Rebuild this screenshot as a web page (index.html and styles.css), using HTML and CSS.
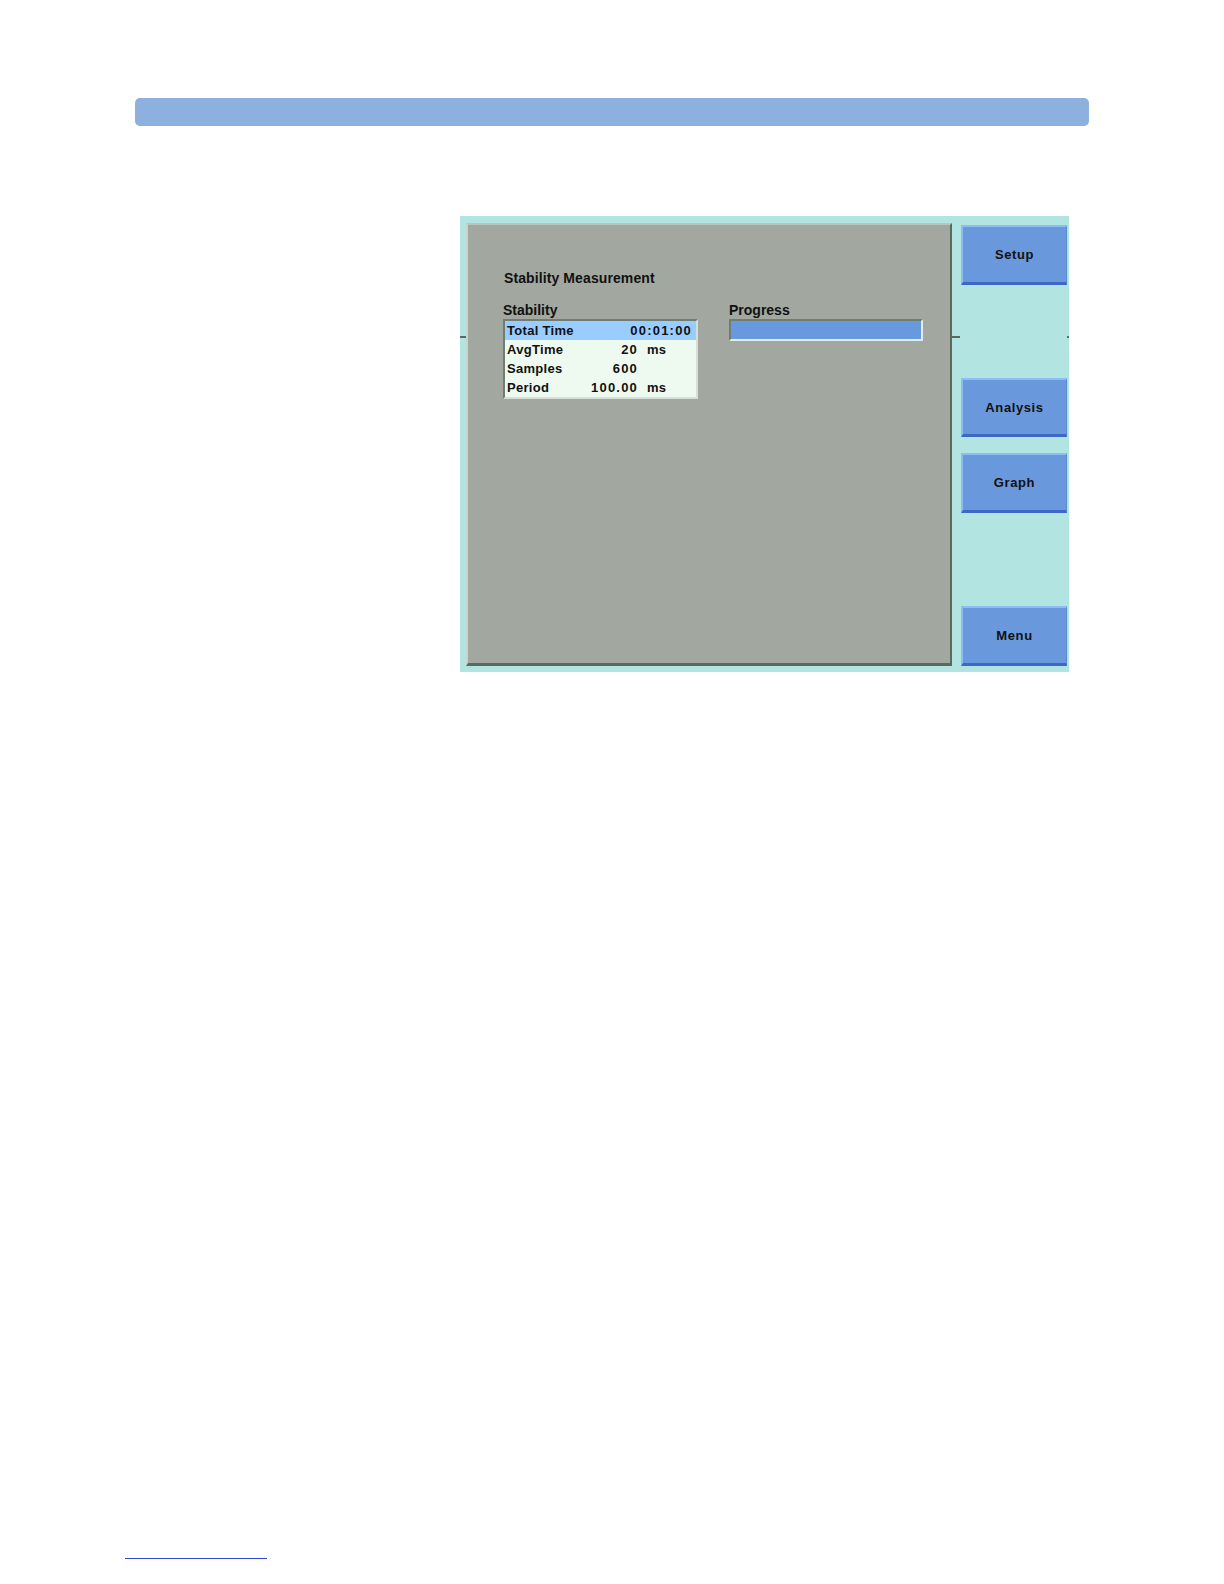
FILE: index.html
```html
<!DOCTYPE html>
<html>
<head>
<meta charset="utf-8">
<link rel="stylesheet" href="styles.css">
</head>
<body>
<div class="page">
  <div class="header-bar"></div>
  <div class="screen">
    <span class="tick tick-left"></span>
    <span class="tick tick-mid"></span>
    <span class="tick tick-right"></span>
    <div class="panel">
      <div class="title">Stability Measurement</div>
      <div class="groups">
        <div class="group">
          <div class="group-label">Stability</div>
          <div class="table">
            <div class="row sel"><span class="lbl">Total Time</span><span class="val wide">00:01:00</span></div>
            <div class="row"><span class="lbl">AvgTime</span><span class="val">20</span><span class="unit">ms</span></div>
            <div class="row"><span class="lbl">Samples</span><span class="val">600</span><span class="unit"></span></div>
            <div class="row"><span class="lbl">Period</span><span class="val">100.00</span><span class="unit">ms</span></div>
          </div>
        </div>
        <div class="group prog-group">
          <div class="group-label">Progress</div>
          <div class="progress"></div>
        </div>
      </div>
    </div>
    <div class="softkeys">
      <div class="key">Setup</div>
      <div class="spacer"></div>
      <div class="key">Analysis</div>
      <div class="key k3">Graph</div>
      <div class="spacer"></div>
      <div class="key">Menu</div>
    </div>
  </div>
  <div class="foot-line"></div>
</div>
</body>
</html>
```
FILE: styles.css
```css
html, body {
  margin: 0;
  padding: 0;
  background: #ffffff;
  overflow: hidden;
}
.page {
  width: 1224px;
  padding-top: 98px;
  box-sizing: border-box;
  font-family: "Liberation Sans", Arial, sans-serif;
}
.header-bar {
  margin-left: 135px;
  width: 954px;
  height: 28px;
  background: #8eb0df;
  border-radius: 5px;
}
.screen {
  position: relative;
  margin-left: 460px;
  margin-top: 90px;
  width: 609px;
  height: 456px;
  background: #b2e4e2;
  box-sizing: border-box;
  padding: 7px 2px 6px 6px;
  display: flex;
}
.tick {
  position: absolute;
  top: 120px;
  height: 2px;
  background: #5a6a60;
}
.tick-left { left: 0; width: 6px; }
.tick-mid { left: 492px; width: 8px; }
.tick-right { left: 607px; width: 2px; }
.panel {
  width: 486px;
  height: 443px;
  box-sizing: border-box;
  background: #a2a89f;
  border-left: 2px solid #c8d4cc;
  border-top: 2px solid #b8c4bc;
  border-right: 2px solid #5a6a5e;
  border-bottom: 3px solid #5a6a5e;
  padding: 45px 0 0 35px;
}
.title {
  font-size: 14px;
  font-weight: bold;
  color: #111;
  line-height: 16px;
  margin-left: 1px;
  letter-spacing: 0.1px;
}
.groups {
  display: flex;
  margin-top: 17px;
}
.group-label {
  font-size: 14px;
  font-weight: bold;
  color: #111;
  line-height: 15px;
  margin-bottom: 1px;
}
.table {
  width: 195px;
  box-sizing: border-box;
  border-top: 2px solid #6f7d74;
  border-left: 2px solid #6f7d74;
  border-right: 2px solid #d6dfd8;
  border-bottom: 2px solid #d6dfd8;
  background: #eefaf0;
}
.row {
  display: flex;
  height: 19px;
  align-items: center;
  font-size: 13px;
  font-weight: bold;
  color: #111;
  padding-left: 2px;
  letter-spacing: 0.3px;
}
.row.sel {
  background: #99ccff;
}
.lbl {
  width: 75px;
}
.val {
  width: 56px;
  text-align: right;
  letter-spacing: 1.2px;
}
.val.wide {
  width: 110px;
}
.unit {
  margin-left: 9px;
}
.prog-group {
  margin-left: 31px;
}
.progress {
  width: 194px;
  height: 22px;
  box-sizing: border-box;
  border-top: 2px solid #6f7d74;
  border-left: 2px solid #6f7d74;
  border-right: 2px solid #e4ece6;
  border-bottom: 2px solid #e4ece6;
  background: #6699dd;
}
.softkeys {
  margin-left: 9px;
  width: 106px;
  display: flex;
  flex-direction: column;
  padding-top: 2px;
}
.key {
  height: 60px;
  box-sizing: border-box;
  background: #6a98dc;
  border-top: 2px solid #8ebdf4;
  border-left: 2px solid #8ebdf4;
  border-bottom: 3px solid #3d68c6;
  border-right: 1px solid #5b88d2;
  display: flex;
  align-items: center;
  justify-content: center;
  font-size: 13px;
  font-weight: bold;
  color: #111;
  letter-spacing: 0.6px;
}
.spacer {
  height: 93px;
}
.k3 {
  margin-top: 16px;
}
.foot-line {
  margin-left: 125px;
  margin-top: 886px;
  width: 142px;
  height: 1px;
  background: #3344cc;
}
```
